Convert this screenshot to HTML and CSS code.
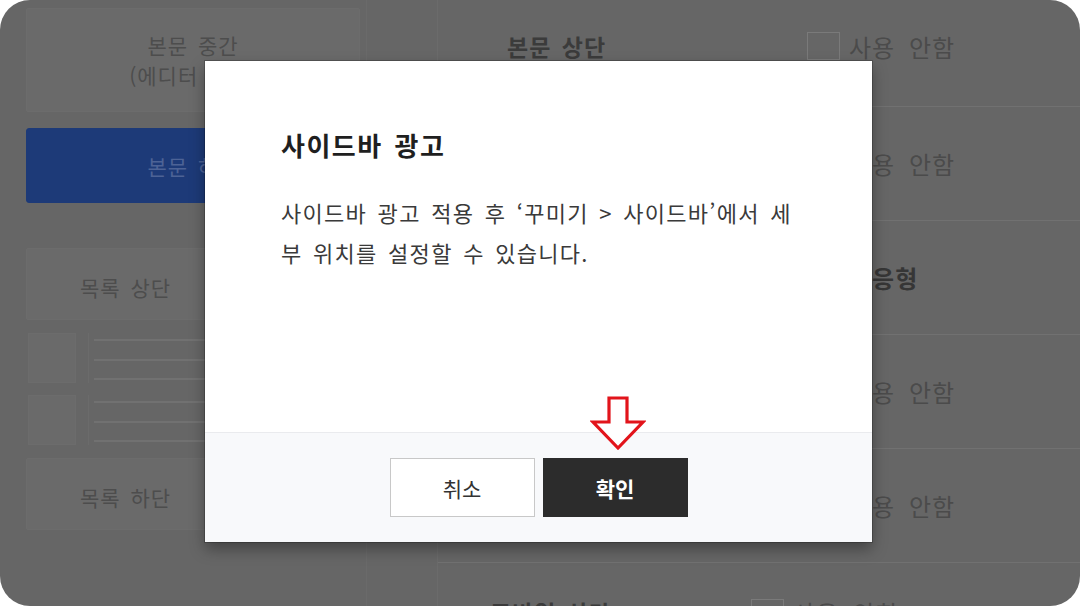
FILE: index.html
```html
<!DOCTYPE html>
<html lang="ko">
<head>
<meta charset="utf-8">
<title>사이드바 광고</title>
<link rel="stylesheet" href="styles.css">
</head>
<body>
<div class="screen">
  <div class="page">
    <aside class="left">
      <div class="card card-tall">본문 중간<br>(에디터 영역)</div>
      <div class="card card-blue">본문 하단</div>
      <div class="card card-list">목록 상단</div>
      <div class="list">
        <div class="list-item"><span class="thumb"></span><span class="lines"><i></i><i></i><i></i></span></div>
        <div class="list-item"><span class="thumb"></span><span class="lines"><i></i><i></i><i></i></span></div>
      </div>
      <div class="card card-list">목록 하단</div>
    </aside>
    <div class="gutter"></div>
    <section class="right">
      <div class="row row-first"><span class="label">본문 상단</span><span class="opt"><span class="check"></span>사용 안함</span></div>
      <div class="row"><span class="label">본문 중간</span><span class="opt"><span class="check"></span>사용 안함</span></div>
      <div class="row"><span class="label">본문 하단</span><span class="opt opt-strong"><span class="check"></span>반응형</span></div>
      <div class="row"><span class="label">목록 상단</span><span class="opt"><span class="check"></span>사용 안함</span></div>
      <div class="row"><span class="label">목록 하단</span><span class="opt"><span class="check"></span>사용 안함</span></div>
      <div class="row row-last"><span class="label">모바일 상단</span><span class="opt"><span class="check"></span>사용 안함</span></div>
    </section>
  </div>

  <div class="dialog">
    <div class="dialog-body">
      <h2 class="dialog-title">사이드바 광고</h2>
      <p class="dialog-text">사이드바 광고 적용 후 ‘꾸미기 &gt; 사이드바’에서 세<br>부 위치를 설정할 수 있습니다.</p>
    </div>
    <div class="dialog-footer">
      <button class="btn btn-cancel" type="button">취소</button>
      <button class="btn btn-ok" type="button">확인</button>
    </div>
    <svg class="arrow" width="56" height="58" viewBox="0 0 56 58" aria-hidden="true">
      <polygon points="19,3 37,3 37,27 53,27 28,53 3,27 19,27" fill="#ffffff" stroke="#e2141b" stroke-width="3.2" stroke-linejoin="miter"/>
    </svg>
  </div>
</div>
</body>
</html>
```

FILE: styles.css
```css
* { box-sizing: border-box; }

html, body {
  margin: 0;
  padding: 0;
  background: #ffffff;
}

body {
  font-family: "Noto Sans CJK KR", "Noto Sans", sans-serif;
}

.screen {
  position: relative;
  width: 1080px;
  height: 606px;
  border-radius: 30px;
  overflow: hidden;
  background: #666666;
}

.page {
  display: flex;
  height: 100%;
}

/* left column */
.left {
  width: 367px;
  flex: none;
  border-right: 1px solid #6a6a6a;
  padding: 8px 6px 0 26px;
  display: flex;
  flex-direction: column;
}

.card {
  background: #6a6a6a;
  border: 1px solid #6c6c6c;
  border-radius: 2px;
  color: #4d4d4d;
  font-size: 21px;
  letter-spacing: 1px;
  word-spacing: 3px;
  display: flex;
  align-items: center;
}

.card-tall {
  height: 104px;
  margin-bottom: 16px;
  justify-content: center;
  text-align: center;
  line-height: 30px;
}

.card-blue {
  height: 75px;
  margin-bottom: 45px;
  justify-content: center;
  background: #1d3a78;
  border-color: #1d3a78;
  border-radius: 3px;
  color: #4d6396;
}

.card-list {
  height: 72px;
  padding-left: 53px;
  padding-top: 6px;
}

.list {
  height: 112px;
  margin: 13px 0 13px;
  display: flex;
  flex-direction: column;
  gap: 12px;
}

.list-item {
  display: flex;
  gap: 12px;
  height: 50px;
}

.thumb {
  width: 48px;
  margin-left: 2px;
  background: #6a6a6a;
  border: 1px solid #6c6c6c;
}

.lines {
  flex: 1;
  display: flex;
  flex-direction: column;
  justify-content: space-between;
  padding: 6px 0 3px 5px;
  border-left: 1px solid #6b6b6b;
}

.lines i {
  display: block;
  height: 2px;
  background: #717171;
}

.gutter {
  width: 71px;
  flex: none;
  border-right: 1px solid #6b6b6b;
}

/* right column */
.right {
  flex: 1;
  display: flex;
  flex-direction: column;
}

.row {
  height: 114px;
  flex: none;
  display: flex;
  align-items: center;
  padding-left: 69px;
  border-bottom: 1px solid #717171;
}

.row-first {
  height: 107px;
  padding-bottom: 14px;
}

.row-last {
  padding-left: 52px;
  align-items: flex-start;
  padding-top: 32px;
}

.label {
  width: 300px;
  flex: none;
  font-size: 23px;
  font-weight: 700;
  color: #3b3b3b;
  letter-spacing: 1px;
  word-spacing: 3px;
}

.row-last .label {
  width: 261px;
}

.opt {
  display: flex;
  align-items: center;
  gap: 9px;
  font-size: 24px;
  color: #4b4b4b;
  letter-spacing: 1px;
  word-spacing: 6px;
}

.opt-strong {
  color: #363636;
  font-weight: 700;
}

.check {
  width: 33px;
  height: 28px;
  border: 1px solid #7a7a7a;
  background: #666666;
}

/* dialog */
.dialog {
  position: absolute;
  left: 205px;
  top: 61px;
  width: 667px;
  height: 481px;
  background: #ffffff;
  box-shadow: 0 0 0 1px rgba(0, 0, 0, 0.2), 0 7px 14px rgba(0, 0, 0, 0.35);
  display: flex;
  flex-direction: column;
}

.dialog-body {
  height: 371px;
  padding: 66px 76px 0;
}

.dialog-title {
  margin: 0;
  font-size: 26px;
  line-height: 36px;
  font-weight: 700;
  color: #1f1f1f;
  letter-spacing: 1.5px;
  word-spacing: 3px;
}

.dialog-text {
  margin: 29px 0 0;
  font-size: 22px;
  line-height: 40px;
  color: #3a3a3a;
  letter-spacing: 1.3px;
  word-spacing: 3px;
  white-space: nowrap;
}

.dialog-footer {
  flex: 1;
  background: #f8f9fb;
  border-top: 1px solid #eaebee;
  display: flex;
  justify-content: center;
  align-items: center;
  gap: 8px;
}

.btn {
  width: 145px;
  height: 59px;
  font-family: "Noto Sans CJK KR", "Noto Sans", sans-serif;
  font-size: 21px;
  border-radius: 0;
  cursor: pointer;
}

.btn-cancel {
  background: #ffffff;
  border: 1px solid #c8c8c8;
  color: #333333;
}

.btn-ok {
  background: #2c2c2c;
  border: 1px solid #2c2c2c;
  color: #ffffff;
  font-weight: 700;
}

.arrow {
  position: absolute;
  left: 385px;
  top: 334px;
}
```
